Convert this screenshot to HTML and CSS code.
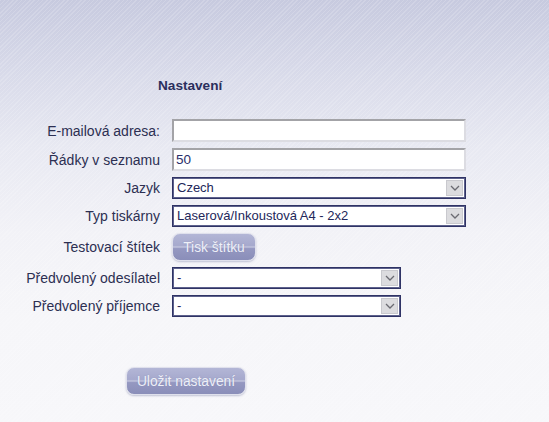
FILE: index.html
```html
<!DOCTYPE html>
<html lang="cs">
<head>
<meta charset="utf-8">
<title>Nastavení</title>
<link rel="stylesheet" href="styles.css">
</head>
<body>
<div class="page">
  <h1 class="title">Nastavení</h1>
  <form class="form">
    <label class="label">E-mailová adresa:</label>
    <div class="field"><input class="text" type="text" value=""></div>

    <label class="label">Řádky v seznamu</label>
    <div class="field"><input class="text" type="text" value="50"></div>

    <label class="label">Jazyk</label>
    <div class="field">
      <div class="select wide"><span class="value">Czech</span><span class="arrow"><svg width="10" height="6" viewBox="0 0 10 6"><path d="M1 1 L5 5 L9 1" fill="none" stroke="#6b6b72" stroke-width="1.3"/></svg></span></div>
    </div>

    <label class="label">Typ tiskárny</label>
    <div class="field">
      <div class="select wide"><span class="value">Laserová/Inkoustová A4 - 2x2</span><span class="arrow"><svg width="10" height="6" viewBox="0 0 10 6"><path d="M1 1 L5 5 L9 1" fill="none" stroke="#6b6b72" stroke-width="1.3"/></svg></span></div>
    </div>

    <label class="label">Testovací štítek</label>
    <div class="field"><button type="button" class="btn btn-print">Tisk štítku</button></div>

    <label class="label">Předvolený odesílatel</label>
    <div class="field">
      <div class="select narrow"><span class="value">-</span><span class="arrow"><svg width="10" height="6" viewBox="0 0 10 6"><path d="M1 1 L5 5 L9 1" fill="none" stroke="#6b6b72" stroke-width="1.3"/></svg></span></div>
    </div>

    <label class="label">Předvolený příjemce</label>
    <div class="field">
      <div class="select narrow"><span class="value">-</span><span class="arrow"><svg width="10" height="6" viewBox="0 0 10 6"><path d="M1 1 L5 5 L9 1" fill="none" stroke="#6b6b72" stroke-width="1.3"/></svg></span></div>
    </div>
  </form>
  <div class="actions">
    <button type="button" class="btn btn-save">Uložit nastavení</button>
  </div>
</div>
</body>
</html>
```

FILE: styles.css
```css
html, body {
  margin: 0;
  padding: 0;
}

body {
  min-height: 422px;
  font-family: "Liberation Sans", Arial, sans-serif;
  font-size: 13px;
  color: #2c2f52;
  background:
    repeating-linear-gradient(135deg, rgba(255,255,255,0.16) 0 1px, rgba(255,255,255,0) 1px 3px),
    linear-gradient(to bottom, #c7cadf 0%, #d9dbea 18%, #e8e9f2 35%, #f2f2f7 55%, #f6f6f9 75%, #f7f7fa 100%);
}

.page {
  padding-top: 78px;
}

.title {
  margin: 0 0 26px 158px;
  font-size: 13.6px;
  line-height: 15px;
  font-weight: bold;
  color: #2a2e5c;
}

.form {
  display: grid;
  grid-template-columns: 160px 294px;
  column-gap: 12px;
  row-gap: 6px;
  align-items: center;
}

.label {
  text-align: right;
  font-size: 14px;
  color: #2c2f52;
  white-space: nowrap;
}

.field {
  display: flex;
  align-items: center;
}

.text {
  box-sizing: border-box;
  width: 294px;
  height: 23px;
  margin: 0;
  padding: 0 2px;
  font-family: "Liberation Sans", Arial, sans-serif;
  font-size: 13.5px;
  color: #2a2e6a;
  background: #fff;
  border-style: solid;
  border-width: 2px;
  border-color: #a3a3a7 #dcdce2 #dcdce2 #a3a3a7;
  outline: none;
}

.select {
  box-sizing: border-box;
  height: 22px;
  display: flex;
  align-items: stretch;
  background: #fff;
  border: 1px solid #2f3365;
  box-shadow: inset 0 0 0 1px #5d618c;
}

.select.wide { width: 294px; }
.select.narrow { width: 229px; }

.value {
  flex: 1;
  padding-left: 4px;
  line-height: 20px;
  color: #23275a;
  white-space: nowrap;
  overflow: hidden;
}

.arrow {
  width: 17px;
  margin: 2px 2px 2px 0;
  display: flex;
  align-items: center;
  justify-content: center;
  background: #dcdcdf;
  border: 1px solid #c9c9ce;
  box-sizing: border-box;
}

.btn {
  box-sizing: border-box;
  height: 28px;
  margin: 0;
  padding: 0;
  font-family: "Liberation Sans", Arial, sans-serif;
  font-size: 13.8px;
  color: #eef0f8;
  border: 1px solid #dfe0ec;
  border-radius: 8px;
  background: linear-gradient(to bottom, #b3b6d6 0%, #a6a9cd 44%, #c3c5de 50%, #9598c1 56%, #8a8eb9 100%);
  box-shadow: 0 1px 2px rgba(90, 95, 140, 0.35);
  text-shadow: 0 0 1px rgba(120, 125, 170, 0.6);
  cursor: pointer;
}

.btn-print {
  width: 84px;
}

.actions {
  margin: 50px 0 0 126px;
}

.btn-save {
  width: 120px;
}
```
